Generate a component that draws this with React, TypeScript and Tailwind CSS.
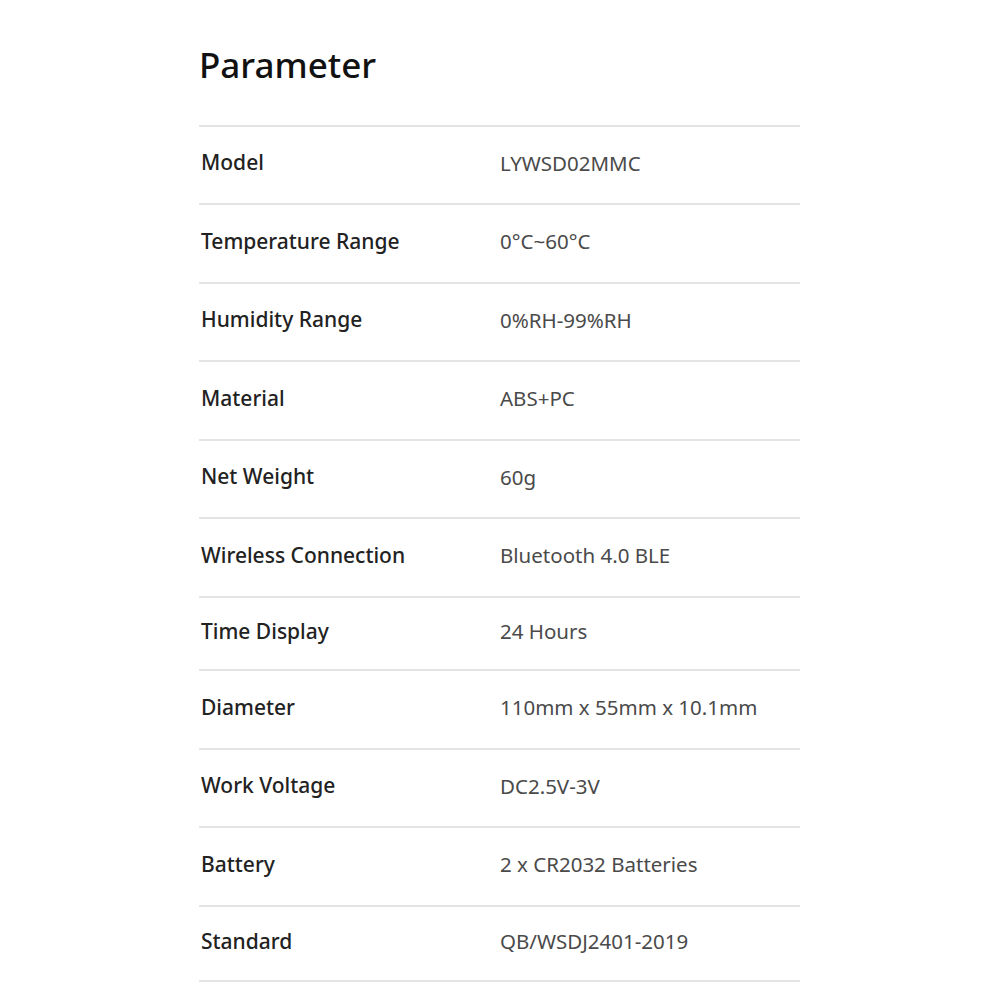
import React from "react";

const rows: { label: string; value: string; h: string }[] = [
  { label: "Model", value: "LYWSD02MMC", h: "h-[76px]" },
  { label: "Temperature Range", value: "0°C~60°C", h: "h-[77px]" },
  { label: "Humidity Range", value: "0%RH-99%RH", h: "h-[76px]" },
  { label: "Material", value: "ABS+PC", h: "h-[77px]" },
  { label: "Net Weight", value: "60g", h: "h-[76px]" },
  { label: "Wireless Connection", value: "Bluetooth 4.0 BLE", h: "h-[77px]" },
  { label: "Time Display", value: "24 Hours", h: "h-[71px]" },
  { label: "Diameter", value: "110mm x 55mm x 10.1mm", h: "h-[77px]" },
  { label: "Work Voltage", value: "DC2.5V-3V", h: "h-[76px]" },
  { label: "Battery", value: "2 x CR2032 Batteries", h: "h-[77px]" },
  { label: "Standard", value: "QB/WSDJ2401-2019", h: "h-[73px]" },
];

export default function App() {
  return (
    <div className="w-[1000px] h-[1000px] bg-white overflow-hidden" style={{ fontFamily: '"Noto Sans", "Open Sans", sans-serif' }}>
      <div className="ml-[199px] w-[601px] pt-[40px]">
        <h1 className="text-[35px] leading-[50px] font-medium text-[#111] h-[85px]">Parameter</h1>
        <div className="h-[2px] bg-[#e4e4e4]" />
        {rows.map((r) => (
          <div key={r.label}>
            <div className={`flex items-center pb-[4px] ${r.h}`}>
              <div className="w-[301px] pl-[2px] text-[21px] font-medium text-[#222]">{r.label}</div>
              <div className="text-[20.5px] text-[#4a4a4a]">{r.value}</div>
            </div>
            <div className="h-[2px] bg-[#e4e4e4]" />
          </div>
        ))}
      </div>
    </div>
  );
}
